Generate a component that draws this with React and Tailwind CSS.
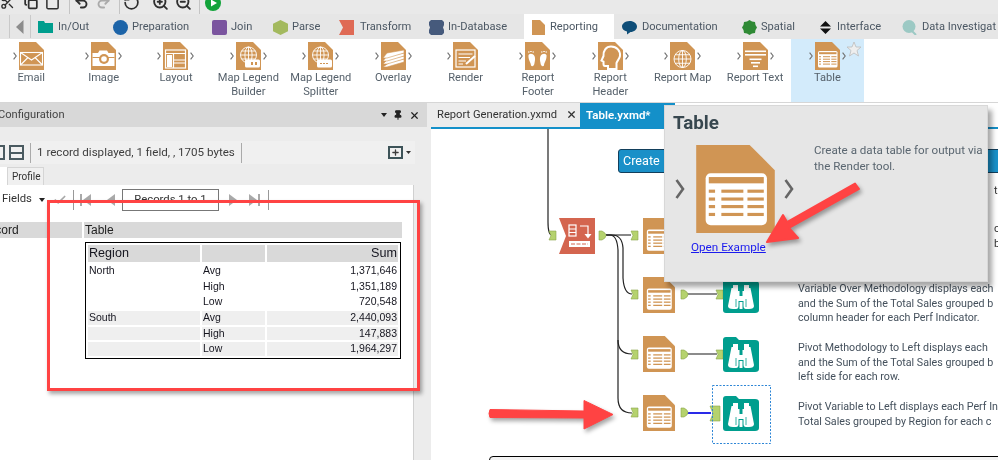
import React from "react";
import { Scissors, Copy, Square, Undo2, Redo2, RotateCcw, ZoomIn, ZoomOut, X, Pin, Check, Plus } from "lucide-react";

const ORANGE = "#d09554";
const TEAL = "#009e8e";

// glyphs are drawn on the 25x28 tool document
const TableGlyph = () => (
  <g>
    <rect x="3" y="9" width="19.5" height="16.5" rx="1.6" fill="#fff" />
    <rect x="4" y="10.2" width="17.5" height="2" fill={ORANGE} />
    {[14.2, 16.7, 19.1, 21.6].map((y) => (
      <g key={y} fill={ORANGE}>
        <rect x="4" y={y} width="2" height="1" />
        <rect x="8" y={y} width="7" height="1" />
        <rect x="16.3" y={y} width="5.2" height="1" />
      </g>
    ))}
  </g>
);

const Globe = ({ cx = 12.5, cy = 16, r = 8 }) => (
  <g fill="none" stroke="#fff" strokeWidth="0.9">
    <circle cx={cx} cy={cy} r={r} />
    <ellipse cx={cx} cy={cy} rx={r * 0.45} ry={r} />
    <path d={`M${cx} ${cy - r}V${cy + r}M${cx - r} ${cy}H${cx + r}M${cx - r + 1} ${cy - r * 0.5}H${cx + r - 1}M${cx - r + 1} ${cy + r * 0.5}H${cx + r - 1}`} />
  </g>
);

const glyphs = {
  email: (
    <g fill="none" stroke="#fff" strokeWidth="1.1">
      <rect x="1.5" y="10.5" width="22" height="12.5" fill={ORANGE} />
      <path d="M1.5 10.5L12.5 18L23.5 10.5M1.5 23L9 15.5M23.5 23L16 15.5" />
    </g>
  ),
  image: (
    <g>
      <path d="M1.5 11H7L8.5 8.5H16L17.5 11H23.5V24H1.5Z" fill="#fff" />
      <rect x="1.5" y="15" width="22" height="1" fill={ORANGE} />
      <circle cx="13" cy="17" r="5" fill={ORANGE} />
      <circle cx="13" cy="17" r="2.8" fill="#fff" />
    </g>
  ),
  layout: (
    <g>
      <rect x="2.5" y="8" width="20" height="18" fill="none" stroke="#fff" strokeWidth="1.2" />
      <path d="M2.5 11.5H22.5M10.5 11.5V26M10.5 18H22.5M10.5 21H22.5" stroke="#fff" strokeWidth="1.2" />
      <rect x="4" y="13" width="5" height="12" fill="#fff" />
    </g>
  ),
  builder: (
    <g>
      <Globe cy={13} r={8} />
      <rect x="9" y="17.5" width="15" height="8" rx="1.5" fill="#fff" />
      <rect x="15" y="20" width="2" height="3" fill={ORANGE} />
      <rect x="19" y="20" width="2" height="3" fill={ORANGE} />
    </g>
  ),
  splitter: (
    <g>
      <Globe cy={13} r={8} />
      <rect x="9" y="17.5" width="15" height="8" rx="1.5" fill="#fff" />
      <path d="M12 21.5H21" stroke={ORANGE} strokeWidth="1" strokeDasharray="2 1" />
    </g>
  ),
  overlay: (
    <g fill="#fff" stroke={ORANGE} strokeWidth="0.6">
      <path d="M9 20L23 17V20L6 25H2Z" />
      <path d="M7 17L23 14V17L6 22H2Z" />
      <path d="M6 14L23 11V14L6 19H2Z" />
      <path d="M6 11L23 8V11L6 16H2Z" />
    </g>
  ),
  render: (
    <g>
      <rect x="3" y="8" width="19" height="17" fill="none" stroke="#fff" strokeWidth="1.2" />
      <path d="M5.5 12H19.5M5.5 15.5H17M5.5 19H13M5.5 22H10" stroke="#fff" strokeWidth="1.1" />
      <path d="M13 22L22 14" stroke="#fff" strokeWidth="2" />
    </g>
  ),
  footer: (
    <g fill="#fff">
      <path d="M3.5 13C5 11 8 11.5 9.5 14C10.5 16.5 10 18.5 9.5 21C9.5 24 7 25 6 23.5C6 20.5 3 18 3.5 13Z" />
      <path d="M21.5 13C20 11 17 11.5 15.5 14C14.5 16.5 15 18.5 15.5 21C15.5 24 18 25 19 23.5C19 20.5 22 18 21.5 13Z" />
      <path d="M3 9.5h1.5v1H3zM5.2 9h1.5v1H5.2zM7.5 9.5H9v1H7.5zM16 9.5h1.5v1H16zM18.3 9h1.5v1h-1.5zM20.5 9.5H22v1h-1.5z" />
    </g>
  ),
  header: (
    <path d="M13 4.5C19 4.5 22.5 9 22 14C21.5 17 19 19 18.5 21V27H10V24H7C6 24 5.5 23 5.5 22V19.5L3.5 18.5L5.5 14C5 9 8 4.5 13 4.5Z" fill={ORANGE} stroke="#fff" strokeWidth="2" />
  ),
  map: <Globe cy={17} r={8.5} />,
  text: (
    <g fill="#fff">
      <rect x="2" y="8.5" width="21" height="1.6" />
      <rect x="2" y="12" width="21" height="1.6" />
      <rect x="6.5" y="16.5" width="12" height="1.6" />
      <rect x="8" y="20" width="9" height="1.6" />
      <rect x="10" y="23.5" width="5" height="1.6" />
    </g>
  ),
  table: <TableGlyph />,
};

const Chevron = () => (
  <svg viewBox="0 0 4 8" className="w-[4px] h-[8px] shrink-0">
    <path d="M0.6 0.6L3.2 4L0.6 7.4" fill="none" stroke="#6f6f6f" strokeWidth="1.1" />
  </svg>
);

const DocIcon = ({ name, className = "w-[25px] h-[28px]" }) => (
  <svg viewBox="0 0 25 28" className={className}>
    <path d="M0 0H17L25 8V28H0Z" fill={ORANGE} />
    {glyphs[name]}
  </svg>
);

const tools = [
  { icon: "email", lines: ["Email"], noOut: true },
  { icon: "image", lines: ["Image"] },
  { icon: "layout", lines: ["Layout"] },
  { icon: "builder", lines: ["Map Legend", "Builder"] },
  { icon: "splitter", lines: ["Map Legend", "Splitter"] },
  { icon: "overlay", lines: ["Overlay"] },
  { icon: "render", lines: ["Render"], noOut: true },
  { icon: "footer", lines: ["Report", "Footer"] },
  { icon: "header", lines: ["Report", "Header"] },
  { icon: "map", lines: ["Report Map"] },
  { icon: "text", lines: ["Report Text"] },
  { icon: "table", lines: ["Table"], active: true },
];

const Tool = ({ icon, lines, noOut, active }) => (
  <div className={`relative w-[72.4px] h-[63px] shrink-0 flex flex-col items-center pt-[3px] ${active ? "bg-[#d3ebfb]" : ""}`}>
    <div className="flex items-center gap-[2px]">
      <Chevron />
      <DocIcon name={icon} />
      <span className={noOut ? "invisible" : ""}>
        <Chevron />
      </span>
    </div>
    <div className="text-center text-[11.1px] leading-[14px] pt-[1px] text-[#56616b] whitespace-nowrap">
      {lines.map((l) => (
        <div key={l}>{l}</div>
      ))}
    </div>
    {active && (
      <svg viewBox="0 0 16 16" className="absolute left-[55px] top-[2px] w-[16px] h-[16px]">
        <path d="M8 1L10 6H15L11 9.5L12.5 15L8 12L3.5 15L5 9.5L1 6H6Z" fill="#eeeeee" stroke="#bdbdbd" strokeWidth="0.8" />
      </svg>
    )}
  </div>
);

const tabs = [
  { label: "In/Out", tw: "w-[30px]", icon: <path d="M0 1H6L7 3H15V13H0Z" fill={TEAL} />, cls: "ml-[7px]", gap: "gap-[5px]" },
  { label: "Preparation", tw: "w-[57px]", icon: <circle cx="7.5" cy="7.5" r="7.5" fill="#1d64a8" />, cls: "ml-[25px]" },
  { label: "Join", tw: "w-[20px]", icon: <rect x="0" y="0" width="15" height="15" rx="2" fill="#7b559f" />, cls: "ml-[23px]" },
  { label: "Parse", tw: "w-[26px]", icon: <path d="M7.5 0L15 3.7V11.3L7.5 15L0 11.3V3.7Z" fill="#a3b95e" />, cls: "ml-[22px]" },
  { label: "Transform", tw: "w-[48px]", icon: <path d="M0 0H15V15H0L4 7.5Z" fill="#df6a55" />, cls: "ml-[21px]", gap: "gap-[6px]" },
  { label: "In-Database", tw: "w-[59px]", icon: <path d="M2 0H13L15 2V5L14 7.5L15 10V13L13 15H2L0 13V10L1 7.5L0 5V2Z" fill="#465a7c" />, cls: "ml-[21px]" },
  { label: "Reporting", tw: "w-[49px]", icon: <path d="M1 0H9L14 5V15H1Z" fill={ORANGE} />, cls: "ml-[17px] pl-[7px] pr-[15px] bg-white", gap: "gap-[4px]" },
  { label: "Documentation", tw: "w-[75px]", icon: <path d="M7.5 1C12 1 15 3.5 15 6.5S12 12 8.5 12L5 14.5V11.5C2 11 0 9 0 6.5S3 1 7.5 1Z" fill="#0f4e78" />, cls: "ml-[8px]", gap: "gap-[5px]" },
  { label: "Spatial", tw: "w-[33px]", icon: <path d="M7.5 0L10 1.5L13 2L13.5 5L15 7.5L13.5 10L13 13L10 13.5L7.5 15L5 13.5L2 13L1.5 10L0 7.5L1.5 5L2 2L5 1.5Z" fill="#2f8a35" />, cls: "ml-[25px]", gap: "gap-[4px]" },
  { label: "Interface", tw: "w-[41px]", icon: <path d="M7.5 1L13 6.5H2ZM7.5 14L2 8.5H13Z" fill="#111" />, cls: "ml-[24px]", gap: "gap-[4px]" },
  { label: "Data Investigat", tw: "", icon: <g><circle cx="7" cy="6.5" r="6.5" fill="#9cc9c4" /><path d="M10 11L14 15" stroke="#9cc9c4" strokeWidth="2" /></g>, cls: "ml-[24px]", gap: "gap-[5px]" },
];

const TopBar = () => (
  <div className="h-[14px] bg-[#e9e9e9] flex overflow-hidden text-[#2f2f2f]">
    <Scissors className="w-[15px] h-[15px] -mt-[5px]" strokeWidth={2.2} />
    <Copy className="w-[14px] h-[15px] -mt-[5px] ml-[9px]" strokeWidth={3} />
    <Square className="w-[15px] h-[16px] -mt-[5px] ml-[7px]" strokeWidth={2.4} />
    <div className="w-px h-full bg-[#c4c4c4] ml-[9px]" />
    <Undo2 className="w-[15px] h-[15px] -mt-[5px] ml-[4px]" strokeWidth={3} />
    <Redo2 className="w-[15px] h-[15px] -mt-[5px] ml-[7px] text-[#aaa]" strokeWidth={3} />
    <div className="w-px h-full bg-[#c4c4c4] ml-[8px]" />
    <RotateCcw className="w-[17px] h-[17px] -mt-[6px] ml-[3px]" strokeWidth={2.4} />
    <ZoomIn className="w-[17px] h-[17px] -mt-[6px] ml-[12px]" strokeWidth={2.6} />
    <ZoomOut className="w-[17px] h-[17px] -mt-[6px] ml-[6px]" strokeWidth={2.6} />
    <div className="w-px h-full bg-[#c4c4c4] ml-[7px]" />
    <svg viewBox="0 0 16 16" className="w-[16px] h-[16px] -mt-[5px] ml-[5px]">
      <circle cx="8" cy="8" r="8" fill="#12a33a" />
      <path d="M6 4.5L12 8L6 11.5Z" fill="#fff" />
    </svg>
  </div>
);

const TabBar = () => (
  <div className="h-[25px] bg-[#e6e6e6] flex items-stretch text-[11.1px] text-[#4b5763] whitespace-nowrap overflow-hidden">
    <div className="w-[9px] shrink-0" />
    <div className="w-[22px] shrink-0 border-x border-[#c9c9c9] flex items-center justify-center my-[1px]">
      <svg viewBox="0 0 8 14" className="w-[8px] h-[14px]">
        <path d="M7.5 0V14L0 7Z" fill="#8c8c8c" />
      </svg>
    </div>
    {tabs.map((t) => (
      <div key={t.label} className={`flex items-center shrink-0 pt-[1px] ${t.gap || "gap-[4px]"} ${t.cls}`}>
        <svg viewBox="0 0 15 15" className="w-[15px] h-[15px] shrink-0">
          {t.icon}
        </svg>
        <span className={t.tw}>{t.label}</span>
      </div>
    ))}
  </div>
);

const Palette = () => (
  <div className="h-[63px] bg-white flex -ml-[5px]">
    {tools.map((t) => (
      <Tool key={t.icon} {...t} />
    ))}
  </div>
);

const tableRows = [
  ["North", "Avg", "1,371,646", ""],
  ["", "High", "1,351,189", ""],
  ["", "Low", "720,548", ""],
  ["South", "Avg", "2,440,093", "bg-[#efefef]"],
  ["", "High", "147,883", "bg-[#efefef]"],
  ["", "Low", "1,964,297", "bg-[#efefef]"],
];

const ResultTable = () => (
  <div className="ml-[85px] mt-[4px] w-[316px] border border-black p-[2px] grid grid-cols-[112px_63px_1fr] gap-[2px] font-['Liberation_Sans',sans-serif] text-[#15151f] text-[10.5px] leading-[13.7px]">
    <div className="bg-[#d9d9d9] h-[17px] text-[12.6px] leading-[17px] pl-[1px]">Region</div>
    <div className="bg-[#d9d9d9] h-[17px]" />
    <div className="bg-[#d9d9d9] h-[17px] text-[12.6px] leading-[17px] text-right pr-[1px]">Sum</div>
    {tableRows.map(([a, b, c, bg], i) => (
      <React.Fragment key={i}>
        <div className={`h-[13.7px] pl-[1px] ${bg}`}>{a}</div>
        <div className={`h-[13.7px] pl-[1px] ${bg}`}>{b}</div>
        <div className={`h-[13.7px] pr-[1px] text-right ${bg}`}>{c}</div>
      </React.Fragment>
    ))}
  </div>
);

const Triangle = ({ left }) => (
  <svg viewBox="0 0 8 12" className="w-[8px] h-[12px] shrink-0">
    {left ? <path d="M8 0V12L0 6Z" fill="#a9a9a9" /> : <path d="M0 0V12L8 6Z" fill="#a9a9a9" />}
  </svg>
);

const LeftPanel = () => (
  <div className="w-[431px] shrink-0 flex flex-col bg-[#ececec]">
    <div className="w-[427px] h-[24px] bg-[#d8d8d8] flex items-center text-[11.1px] text-[#444] relative">
      <span className="-ml-[2px]">Configuration</span>
      <div className="ml-auto flex items-center gap-[6px] pr-[7px] text-[#222]">
        <svg viewBox="0 0 6 4" className="w-[6px] h-[4px]"><path d="M0 0H6L3 4Z" fill="#222" /></svg>
        <Pin className="w-[10px] h-[12px]" strokeWidth={2.6} fill="#222" />
        <X className="w-[11px] h-[11px]" strokeWidth={2.6} />
      </div>
    </div>
    <div className="flex-1 flex flex-col pt-[14px]">
      <div className="w-[415px] h-[23px] bg-[#f0f0f0] flex items-center shrink-0 text-[11.6px] text-[#3d3d3d]">
        <div className="w-[5px] h-[15px] border-2 border-l-0 border-[#4a5a60] shrink-0" />
        <div className="ml-[4px] w-[15px] h-[15px] border-2 border-[#4a5a60] flex flex-col justify-center shrink-0">
          <div className="h-[2px] bg-[#4a5a60]" />
        </div>
        <div className="ml-[6px] w-px h-[20px] bg-[#aaa]" />
        <span className="ml-[6px] whitespace-nowrap">1 record displayed, 1 field, , 1705 bytes</span>
        <div className="ml-[6px] w-px h-[20px] bg-[#aaa]" />
        <div className="ml-auto flex items-center gap-[3px] pr-[4px]">
          <div className="w-[15px] h-[13px] border-2 border-[#3d5358] flex items-center justify-center">
            <Plus className="w-[9px] h-[9px]" strokeWidth={3.5} />
          </div>
          <svg viewBox="0 0 5 3" className="w-[5px] h-[3px]"><path d="M0 0H5L2.5 3Z" fill="#333" /></svg>
        </div>
      </div>
      <div className="h-[21px] flex items-end shrink-0 text-[10px] text-[#333]">
        <div className="w-[7px] h-[18px] bg-white" />
        <div className="h-[18px] w-[37px] pl-[4px] border border-b-0 border-[#d5d5d5] bg-[#f0f0f0] leading-[18px]">Profile</div>
      </div>
      <div className="w-[414px] flex-1 bg-white border-r border-[#d0d0d0]">
        <div className="h-[27px] mt-[1px] flex items-center text-[11.3px] text-[#333]">
          <span className="ml-[2px] w-[28px]">Fields</span>
          <svg viewBox="0 0 6 4" className="w-[6px] h-[4px] ml-[9px]"><path d="M0 0H6L3 4Z" fill="#222" /></svg>
          <Check className="w-[14px] h-[14px] ml-[8px] text-[#a9a9a9]" strokeWidth={3} />
          <div className="ml-[6px] w-px h-[20px] bg-[#999]" />
          <div className="ml-[6px] flex items-center gap-[1px]">
            <div className="w-[2px] h-[12px] bg-[#a9a9a9]" />
            <Triangle left />
          </div>
          <div className="ml-[16px]"><Triangle left /></div>
          <div className="ml-[7px] w-[97px] h-[22px] border border-[#777] text-center leading-[20px]">Records 1 to 1</div>
          <div className="ml-[10px]"><Triangle /></div>
          <div className="ml-[12px] flex items-center gap-[1px]">
            <Triangle />
            <div className="w-[2px] h-[12px] bg-[#a9a9a9]" />
          </div>
          <div className="ml-[8px] w-px h-[20px] bg-[#999]" />
        </div>
        <div className="mt-[9px] flex font-['Liberation_Sans',sans-serif] text-[12px] text-[#222] leading-[16px]">
          <div className="w-[82px] h-[16px] bg-[#d9d9d9] overflow-hidden"><span className="-ml-[20px] inline-block">Record</span></div>
          <div className="ml-[2px] w-[318px] h-[16px] bg-[#d9d9d9] pl-[1px]">Table</div>
        </div>
        <ResultTable />
      </div>
    </div>
  </div>
);

const InAnchor = ({ x, y, big }) =>
  big ? (
    <path d={`M${x} ${y}H${x + 10}V${y + 15}H${x}L${x + 3} ${y + 7.5}Z`} fill="#b5d26e" stroke="#8aa64b" strokeWidth="0.6" />
  ) : (
    <path d={`M${x} ${y}H${x + 7}V${y + 9}H${x}L${x + 2} ${y + 4.5}Z`} fill="#b5d26e" stroke="#8aa64b" strokeWidth="0.6" />
  );

const OutAnchor = ({ x, y }) => (
  <path d={`M${x} ${y}H${x + 3}Q${x + 7} ${y + 2} ${x + 7} ${y + 4.5}Q${x + 7} ${y + 7} ${x + 3} ${y + 9}H${x}Z`} fill="#b5d26e" stroke="#8aa64b" strokeWidth="0.6" />
);

const TableNode = ({ x, y }) => (
  <svg x={x} y={y} width="32" height="36" viewBox="0 0 25 28">
    <path d="M0 0H17L25 8V28H0Z" fill={ORANGE} />
    <TableGlyph />
  </svg>
);

// folder with the browse binoculars on it
const BrowseNode = ({ x, y }) => (
  <g transform={`translate(${x} ${y})`}>
    <path d="M0 3Q0 0 3 0H13L16 3H32Q36 3 36 6V32Q36 35 32 35H3Q0 35 0 32Z" fill={TEAL} />
    <path d="M10 7H15V13H16.5V18H19.5V13H21V7H26V10H27.5L31 28Q31 31 26 31H23Q20.5 31 20.5 28V23H15.5V28Q15.5 31 13 31H10Q5 31 5 28L8.5 10H10Z" fill="#fff" />
    <path d="M16.5 24H19.5V31H16.5Z" fill="#fff" />
    <path d="M13 21V29M23 21V29" stroke={TEAL} strokeWidth="0.8" />
  </g>
);

const Diagram = () => (
  <svg viewBox="431 128 567 332" className="absolute left-0 -top-px w-[567px] h-[332px]">
    <g fill="none" stroke="#222" strokeWidth="1.2">
      <path d="M548 128V222Q548 235 552 235" />
      <path d="M606 235H631" stroke="#555" strokeWidth="1.4" />
      <path d="M606 235H612Q622 235 623 248V278Q624 294 632 294" />
      <path d="M606 235H610Q617 235 618 250V340Q618 354 632 354" />
      <path d="M618 340V398Q618 413 632 413" />
      <path d="M686 294H717M686 354H717" stroke="#666" strokeWidth="1.4" />
      <path d="M686 413H711" stroke="#2a2ae8" strokeWidth="2" />
    </g>
    <InAnchor x={549} y={231} />
    <path d="M559 218H595V254H559L566 236Z" fill="#d4654f" />
    <g fill="none" stroke="#fff" strokeWidth="1.2">
      <rect x="569" y="225" width="7" height="11" />
      <path d="M569 229H576M569 232.5H576M580 226H588V236" />
    </g>
    <path d="M584.5 234H591.5L588 238.5Z" fill="#fff" />
    <rect x="569" y="241" width="21" height="6" fill="#fff" />
    <path d="M571 244H588" stroke="#d4654f" strokeDasharray="4 1.5" />
    <OutAnchor x={599} y={231} />
    <InAnchor x={631} y={231} />
    <TableNode x={643} y={218} />
    {[
      { y: 277, a: 290 },
      { y: 336, a: 350 },
      { y: 395, a: 408 },
    ].map((r) => (
      <g key={r.y}>
        <InAnchor x={631} y={r.a} />
        <TableNode x={643} y={r.y} />
        <OutAnchor x={681} y={r.a} />
      </g>
    ))}
    <InAnchor x={716} y={290} />
    <BrowseNode x={723} y={278} />
    <InAnchor x={716} y={350} />
    <BrowseNode x={723} y={337} />
    <InAnchor x={710} y={406} big />
    <BrowseNode x={723} y={396} />
    <rect x="712.5" y="385.5" width="58" height="58" fill="none" stroke="#2e86d6" strokeDasharray="2 1.5" />
  </svg>
);

const notes = [
  { cls: "top-[153px]", lines: ["Variable Over Methodology displays each", "and the Sum of the Total Sales grouped b", "column header for each Perf Indicator."] },
  { cls: "top-[212px]", lines: ["Pivot Methodology to Left displays each", "and the Sum of the Total Sales grouped b", "left side for each row."] },
  { cls: "top-[271px]", lines: ["Pivot Variable to Left displays each Perf In", "Total Sales grouped by Region for each c"] },
];

const Canvas = () => (
  <div className="relative flex-1 bg-white border-t-2 border-[#1490c9] overflow-hidden">
    <Diagram />
    <div className="absolute left-[187px] top-[20px] w-[400px] h-[24px] bg-[#1a90c8] border border-[#123f5c] rounded-[3px] text-[12.6px] leading-[22px] text-white pl-[4px]">Create</div>
    <span className="absolute left-[563px] top-[55px] text-[11px] leading-[14px] text-[#333]">ta</span>
    <span className="absolute left-[563px] top-[93px] text-[11px] leading-[14px] text-[#333]">ch</span>
    <span className="absolute left-[563px] top-[108px] text-[11px] leading-[14px] text-[#333]">b</span>
    {notes.map((n) => (
      <div key={n.cls} className={`absolute left-[367px] whitespace-nowrap text-[10.7px] leading-[14.5px] text-[#44505c] ${n.cls}`}>
        {n.lines.map((l) => (
          <div key={l}>{l}</div>
        ))}
      </div>
    ))}
    <div className="absolute left-[58px] top-[327px] w-[560px] h-[20px] bg-[#f3f3f3] border border-black rounded-[4px]" />
  </div>
);

const Popup = () => (
  <div className="absolute left-[233px] top-[2px] w-[324px] h-[177px] bg-[#e6e6e6] border border-[#d8d8d8] shadow-[4px_5px_5px_rgba(0,0,0,0.35)] z-10">
    <div className="pl-[8px] pt-[4px] text-[18.8px] leading-[26px] font-bold text-[#37474f]">Table</div>
    <div className="flex mt-[9px]">
      <div className="ml-[10px] mt-[34px]">
        <svg viewBox="0 0 10 20" className="w-[10px] h-[20px]"><path d="M1.5 1L8 10L1.5 19" fill="none" stroke="#666" strokeWidth="2.6" /></svg>
      </div>
      <div className="ml-[11px] flex flex-col">
        <DocIcon name="table" className="w-[79px] h-[88px]" />
      </div>
      <div className="ml-[9px] mt-[34px]">
        <svg viewBox="0 0 10 20" className="w-[10px] h-[20px]"><path d="M1.5 1L8 10L1.5 19" fill="none" stroke="#666" strokeWidth="2.6" /></svg>
      </div>
      <div className="ml-[20px] -mt-[2px] w-[172px] text-[11.6px] leading-[15.5px] text-[#5a6670]">
        Create a data table for output via the Render tool.
      </div>
    </div>
    <a className="absolute left-[26px] top-[133px] text-[11.7px] leading-[16px] text-[#1a1aee] underline">Open Example</a>
  </div>
);

const Annotations = () => (
  <>
    <div className="absolute left-[47px] top-[200px] w-[373px] h-[191px] border-[3px] border-[#ff4343] shadow-[2px_3px_4px_rgba(0,0,0,0.35)] z-20" />
    <svg viewBox="0 0 998 460" className="absolute inset-0 w-[998px] h-[460px] z-20 drop-shadow-[2px_3px_2px_rgba(0,0,0,0.35)]">
      <path d="M855 183.5L859 189L789 228L798 238L767 242L783 215L787 222Z" fill="#ff4343" stroke="#ff4343" strokeWidth="2" strokeLinejoin="round" />
      <path d="M490 409.5L584 411V400.5L613 414.5L584 429V418L490 417.5Q488 413.5 490 409.5Z" fill="#ff4343" stroke="#ff4343" strokeLinejoin="round" />
    </svg>
  </>
);

export default function App() {
  return (
    <div className="relative w-[998px] h-[460px] overflow-hidden bg-[#e6e6e6] font-['Roboto',sans-serif] blur-[0.3px]">
      <TopBar />
      <TabBar />
      <Palette />
      <div className="h-[1px] bg-[#d6d6d6]" />
      <div className="h-[357px] flex">
        <LeftPanel />
        <div className="relative flex-1 flex flex-col">
          <div className="h-[24px] flex text-[11.2px] leading-[24px] bg-white shrink-0">
            <div className="w-[149px] bg-[#ececec] text-[#333] pl-[6px] relative whitespace-nowrap">
              Report Generation.yxmd
              <X className="absolute left-[135px] top-[6px] w-[11px] h-[11px]" strokeWidth={2.6} />
            </div>
            <div className="w-[95px] bg-[#1490c9] text-white font-semibold pl-[6px] text-[11.5px]">Table.yxmd*</div>
          </div>
          <Canvas />
          <Popup />
        </div>
      </div>
      <Annotations />
    </div>
  );
}
